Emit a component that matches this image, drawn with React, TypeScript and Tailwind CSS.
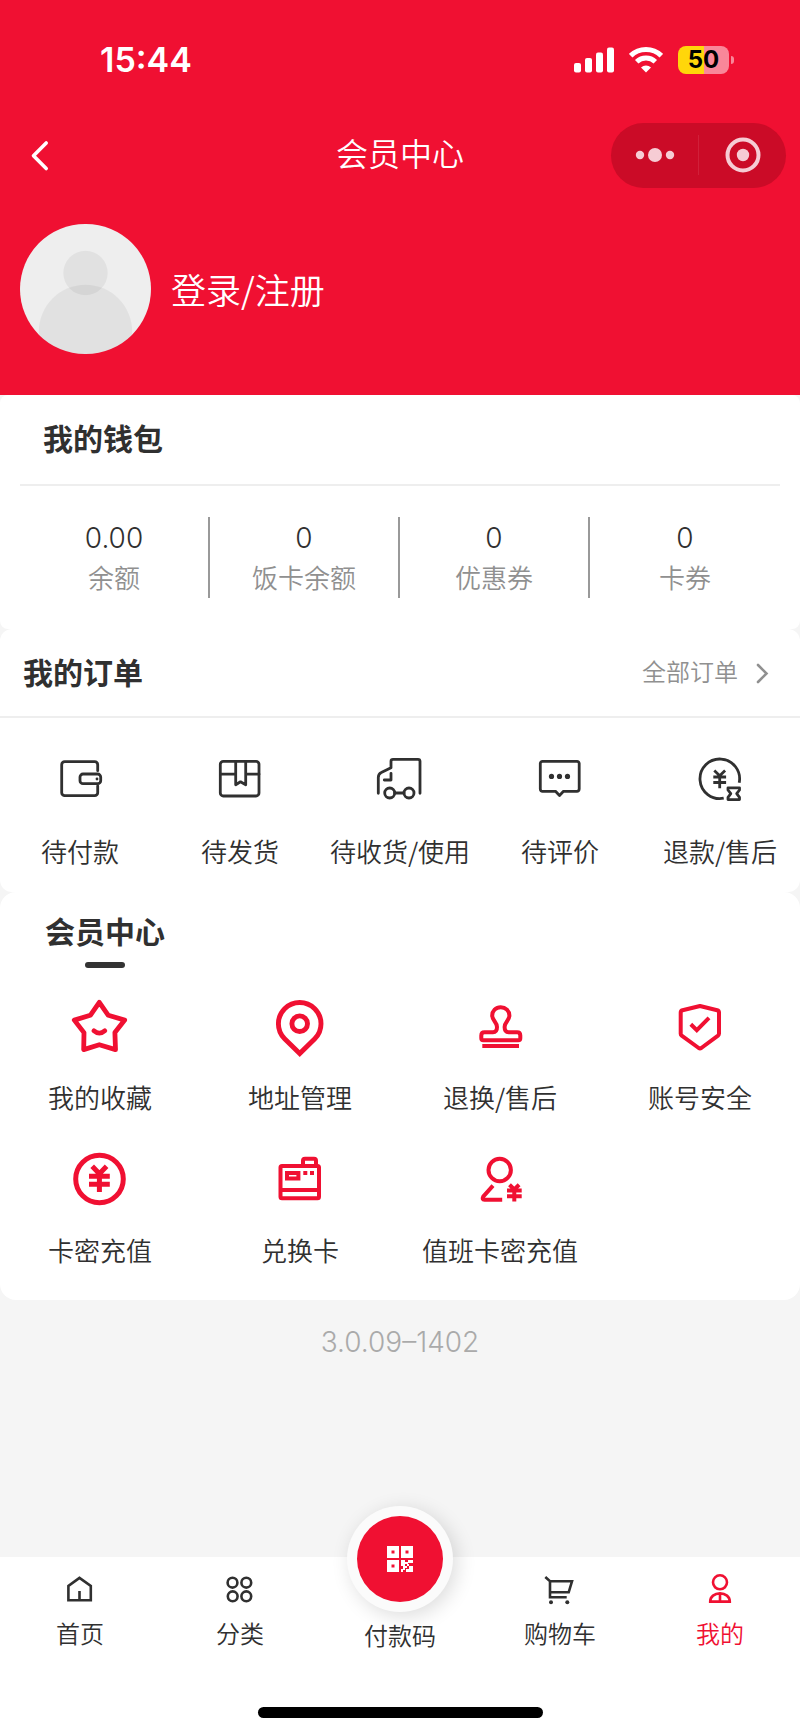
import type { ReactNode } from 'react';

interface Entry {
  label: string;
  icon: ReactNode;
}

const wallet = [
  { value: '0.00', label: '余额' },
  { value: '0', label: '饭卡余额' },
  { value: '0', label: '优惠券' },
  { value: '0', label: '卡券' },
];

const orders: Entry[] = [
  {
    label: '待付款',
    icon: (
      <>
        <path d="M41.7 15.7V9.7a3 3 0 0 0-3-3H8.7a3 3 0 0 0-3 3v28a3 3 0 0 0 3 3h30a3 3 0 0 0 3-3V31" />
        <rect x="24" y="19" width="20.7" height="9.7" rx="3" />
        <circle cx="41" cy="24" r="1.4" fill="currentColor" stroke="none" />
      </>
    ),
  },
  {
    label: '待发货',
    icon: (
      <>
        <rect x="4.3" y="6.3" width="38.7" height="34.7" rx="3" />
        <path d="M4.3 19.2h15.4M29.7 19.2H43M19.7 6.3v23.5l4.8-3 5.2 3V6.3" />
      </>
    ),
  },
  {
    label: '待收货/使用',
    icon: (
      <>
        <path d="M2.3 38.3V22.5c0-2.4.9-3.9 3-4.9L15 12.7V6.3c0-1.4.6-2 2-2h25c1.4 0 2 .6 2 2v32" />
        <path d="M15 18.3V25H8.3M18.7 38H28" />
        <circle cx="13.7" cy="38" r="5" />
        <circle cx="33" cy="38" r="5" />
      </>
    ),
  },
  {
    label: '待评价',
    icon: (
      <>
        <path d="M6.5 6.3H41a2.2 2.2 0 0 1 2.2 2.2v25.6a2.2 2.2 0 0 1-2.2 2.2H27.5l-4 4.2-4-4.2h-13a2.2 2.2 0 0 1-2.2-2.2V8.5a2.2 2.2 0 0 1 2.2-2.2z" />
        <g fill="currentColor" stroke="none">
          <circle cx="15.5" cy="21.4" r="2.6" />
          <circle cx="23.5" cy="21.4" r="2.6" />
          <circle cx="31.5" cy="21.4" r="2.6" />
        </g>
      </>
    ),
  },
  {
    label: '退款/售后',
    icon: (
      <>
        <path d="M43.2 27.7A19.8 19.8 0 1 0 27.7 43.2" strokeLinecap="butt" />
        <path d="M18.3 15.5l5.4 5.2 5.4-5.2M17.3 22h12.8M17.3 27.5h12.8M23.7 20.7V33.3" strokeLinecap="butt" />
        <path d="M32 32.8h11.5v2.2l-2.8 3.7 2.8 3.7v2.2H32v-2.2l2.8-3.7L32 35z" />
      </>
    ),
  },
];

const services: Entry[] = [
  {
    label: '我的收藏',
    icon: (
      <g strokeWidth="4.8">
        <path d="M31.3 8.3l9 13 16.4 4.8L46.9 38.6l.6 17-16.2-4.9-15.6 4.9.3-17L6.3 26.1l16-4.8z" />
        <path d="M25.9 36.8c3.3 3 7.6 3 10.9 0" />
      </g>
    ),
  },
  {
    label: '地址管理',
    icon: (
      <g strokeWidth="4.9" strokeLinejoin="miter">
        <path d="M31.7 59.5L16.6 44.8a21.3 21.3 0 1 1 30.2 0z" />
        <circle cx="31.7" cy="29.7" r="7.8" />
      </g>
    ),
  },
  {
    label: '退换/售后',
    icon: (
      <g strokeWidth="4">
        <path d="M32.7 13.2c-5 0-8.5 3.8-8.5 8.3 0 5 4.8 6.4 4.8 11.5 0 3.4-1.5 5.3-4 5.3h-8.5c-2 0-3.2 1.2-3.2 3.2v2.7c0 1.4.7 2.1 2 2.1h35c1.3 0 2-.7 2-2.1v-2.7c0-2-1.2-3.2-3.2-3.2h-8.5c-2.5 0-4-1.9-4-5.3 0-5.1 4.8-6.5 4.8-11.5 0-4.5-3.7-8.3-8.7-8.3z" />
        <path d="M14.3 52H51" strokeLinecap="butt" />
      </g>
    ),
  },
  {
    label: '账号安全',
    icon: (
      <g strokeWidth="4">
        <path d="M32 12l17.2 4.3q1.8.5 1.8 2.3v21q0 1.2-1 2L33.3 54q-1.3.8-2.6 0L13.7 41.7q-1-.8-1-2V18.6q0-1.8 1.8-2.3z" />
        <path d="M22.8 30.3l6 5.8 12.2-12.2" strokeLinecap="butt" strokeLinejoin="miter" />
      </g>
    ),
  },
  {
    label: '卡密充值',
    icon: (
      <g strokeWidth="5" strokeLinecap="butt">
        <circle cx="31.5" cy="32" r="23.8" />
        <path d="M24.2 19.2l7.2 7.5 7.2-7.5M21 29.3h20.8M21 37.2h20.8M31.4 26v19" />
      </g>
    ),
  },
  {
    label: '兑换卡',
    icon: (
      <g strokeWidth="4" strokeLinecap="butt">
        <rect x="12.5" y="19" width="38.5" height="32.3" rx="1.5" />
        <path d="M12.5 43H51M35 19v-5.3q0-2 2-2h9q2 0 2 2V19" />
        <path d="M19 26h11.4v5.4H19z" strokeLinejoin="miter" />
        <path d="M35.3 26h4M42 26h4" />
      </g>
    ),
  },
  {
    label: '值班卡密充值',
    icon: (
      <g strokeWidth="4" strokeLinecap="butt">
        <circle cx="31.7" cy="23" r="11.2" />
        <path d="M25 38.7l-9.8 11q-1.5 3 1.3 3H34.2" />
        <path d="M41.5 37.7l4.8 4.7 4.8-4.7M39 43.6h14.7M39 49.3h14.7M46.3 42v12.5" />
      </g>
    ),
  },
];

const homeTab: Entry = {
  label: '首页',
  icon: <path d="M15.5 4.9L4.4 13v14.3h22.4V13zM15.5 18v9.3" />,
};

const categoryTab: Entry = {
  label: '分类',
  icon: (
    <>
      <circle cx="8.5" cy="9.7" r="4.9" />
      <circle cx="22.3" cy="9.7" r="4.9" />
      <circle cx="8.7" cy="23.3" r="4.9" />
      <circle cx="22.3" cy="23.3" r="4.9" />
    </>
  ),
};

const cartTab: Entry = {
  label: '购物车',
  icon: (
    <>
      <path d="M1.3 4L6 8.3h22l-3.3 11H6M6 8.3v16h16.7" />
      <circle cx="7" cy="29.3" r="2" fill="currentColor" stroke="none" />
      <circle cx="23.3" cy="29.3" r="2" fill="currentColor" stroke="none" />
    </>
  ),
};

const mineTab: Entry = {
  label: '我的',
  icon: (
    <>
      <circle cx="16" cy="9.3" r="7" />
      <path d="M6.2 28.6c0-5 4.3-8.2 9.8-8.2s9.800 3.200 9.800 8.200zM16 20.400v8.200" />
    </>
  ),
};

function StatusBar() {
  return (
    <div className="flex h-[110px] items-center justify-between pt-[10px] pr-[66px] pl-[100px]">
      <span className="text-[34px] leading-10 font-semibold">15:44</span>
      <div className="flex items-center gap-[15px]">
        <svg width="40" height="26" viewBox="0 0 40 26" fill="currentColor">
          <rect x="0" y="16" width="7" height="9.5" rx="2" />
          <rect x="11" y="11" width="7" height="14.5" rx="2" />
          <rect x="22" y="5.5" width="7" height="20" rx="2" />
          <rect x="33" y="0.5" width="7" height="25" rx="2" />
        </svg>
        <svg width="34" height="26" viewBox="0 0 34 26" fill="none" stroke="currentColor" strokeWidth="5">
          <path d="M1.7 8.7a22 22 0 0 1 30.6 0" />
          <path d="M7.7 14.8a13.5 13.5 0 0 1 18.6 0" />
          <path d="M17 25.5l-5-5a7.2 7.2 0 0 1 10 0z" fill="currentColor" stroke="none" />
        </svg>
        <div className="flex items-center gap-[2px]">
          <div className="flex h-7 w-[51px] items-center justify-center rounded-lg bg-linear-to-r from-[#ffd60a] from-50% to-[#f98799] to-50% text-2xl leading-7 font-bold text-black">
            50
          </div>
          <span className="h-2 w-[3px] rounded-r-full bg-[#f98799]" />
        </div>
      </div>
    </div>
  );
}

function NavBar() {
  return (
    <div className="grid h-[90px] grid-cols-[1fr_auto_1fr] items-center px-[14px]">
      <button type="button" aria-label="返回" className="justify-self-start px-[14px]">
        <svg width="24" height="36" viewBox="0 0 24 36" fill="none" stroke="currentColor" strokeWidth="3.6" strokeLinecap="round" strokeLinejoin="round">
          <path d="M18.2 6L5.5 18.7l12.700 12.800" />
        </svg>
      </button>
      <h1 className="text-[32px] leading-10">会员中心</h1>
      <div className="flex h-[65px] w-[175px] items-center justify-self-end rounded-full bg-[#cb0b27] text-[#f6ccd4]">
        <button type="button" aria-label="更多" className="flex h-10 flex-1 items-center justify-center border-r border-[#d1203a]">
          <svg width="40" height="16" viewBox="0 0 40 16" fill="currentColor">
            <circle cx="5" cy="8" r="4.2" />
            <circle cx="20" cy="8" r="7" />
            <circle cx="35" cy="8" r="4.2" />
          </svg>
        </button>
        <button type="button" aria-label="关闭" className="flex flex-1 items-center justify-center">
          <svg width="36" height="36" viewBox="0 0 36 36" fill="none" stroke="currentColor" strokeWidth="4">
            <circle cx="18" cy="18" r="15.5" />
            <circle cx="18" cy="18" r="6.2" fill="currentColor" stroke="none" />
          </svg>
        </button>
      </div>
    </div>
  );
}

function Profile() {
  return (
    <div className="px-5 pt-6 pb-[41px]">
      <button type="button" className="flex items-center gap-5">
        <svg className="rounded-full bg-[#eeeeee]" width="131" height="130" viewBox="0 0 131 130" fill="#000000" fillOpacity="0.05">
          <circle cx="65.5" cy="49" r="22.2" />
          <circle cx="65.5" cy="107.5" r="46.7" />
        </svg>
        <span className="font-['Noto_Sans_CJK_SC',sans-serif] text-[35px] leading-10">登录/注册</span>
      </button>
    </div>
  );
}

function Wallet() {
  return (
    <section className="rounded-lg bg-white px-5">
      <h2 className="flex h-[91px] items-center border-b-2 border-[#eeeeee] pl-[23px] text-[30px] font-bold">我的钱包</h2>
      <div className="grid grid-cols-4 py-[31px]">
        {wallet.map((item) => (
          <button key={item.label} type="button" className="border-r-2 border-[#999999] text-center last:border-r-0">
            <span className="block text-[28px] leading-[42px]">{item.value}</span>
            <span className="block text-[26px] leading-[39px] text-[#909090]">{item.label}</span>
          </button>
        ))}
      </div>
    </section>
  );
}

function Orders() {
  return (
    <section className="rounded-xl bg-white">
      <div className="flex h-[89px] items-center justify-between border-b-2 border-[#eeeeee] pr-[30px] pl-[23px]">
        <h2 className="text-[30px] leading-10 font-bold">我的订单</h2>
        <a href="#orders" className="flex items-center gap-4 text-2xl text-[#909090]">
          全部订单
          <svg width="16" height="22" viewBox="0 0 16 22" fill="none" stroke="currentColor" strokeWidth="2.6" strokeLinecap="round">
            <path d="M4 3l8.500 8.500L4 20" />
          </svg>
        </a>
      </div>
      <div className="grid grid-cols-5 pt-[37px] pb-[21px]">
        {orders.map((item) => (
          <button key={item.label} type="button" className="flex flex-col items-center gap-7">
            <svg width="48" height="48" viewBox="0 0 48 48" fill="none" stroke="currentColor" strokeWidth="2.8" strokeLinecap="round" strokeLinejoin="round">
              {item.icon}
            </svg>
            <span className="font-['Noto_Sans_CJK_SC',sans-serif] text-[26px] leading-10 whitespace-nowrap">{item.label}</span>
          </button>
        ))}
      </div>
    </section>
  );
}

function MemberCenter() {
  return (
    <section className="rounded-2xl bg-white pt-5 pb-[30px]">
      <div className="flex">
        <div className="ml-[45px] flex flex-col items-center gap-[10px]">
          <h2 className="text-[30px] leading-10 font-bold">会员中心</h2>
          <span className="h-[6px] w-10 rounded-full bg-[#333333]" />
        </div>
      </div>
      <div className="grid grid-cols-4 gap-y-[30px] pt-[26px]">
        {services.map((item) => (
          <button key={item.label} type="button" className="flex flex-col items-center gap-[19px]">
            <svg className="text-[#f01032]" width="64" height="64" viewBox="0 0 64 64" fill="none" stroke="currentColor" strokeLinecap="round" strokeLinejoin="round">
              {item.icon}
            </svg>
            <span className="font-['Noto_Sans_CJK_SC',sans-serif] text-[26px] leading-10 whitespace-nowrap">{item.label}</span>
          </button>
        ))}
      </div>
    </section>
  );
}

function Tab({ item, active }: { item: Entry; active?: boolean }) {
  return (
    <a href="#tab" className={`flex flex-col items-center gap-[14px] pt-4 ${active ? 'text-[#f01032]' : ''}`}>
      <svg width="32" height="32" viewBox="0 0 32 32" fill="none" stroke="currentColor" strokeWidth="2.6">
        {item.icon}
      </svg>
      <span className="text-2xl leading-8">{item.label}</span>
    </a>
  );
}

function TabBar() {
  return (
    <footer className="mt-auto bg-white pb-4">
      <nav className="grid grid-cols-5">
        <Tab item={homeTab} />
        <Tab item={categoryTab} />
        <a href="#pay" className="-mt-[51px] flex flex-col items-center gap-[9px]">
          <span className="flex size-[106px] items-center justify-center rounded-full bg-[#fbfbfb] shadow-[4px_4px_20px_rgba(0,0,0,0.14)]">
            <span className="flex size-[86px] items-center justify-center rounded-full bg-[#f01032] text-white">
              <svg width="26" height="26" viewBox="0 0 26 26" fill="currentColor" fillRule="evenodd">
                <path d="M0 0h12v12H0zM4.5 4.5v3h3v-3z" />
                <path d="M14 0h12v12H14zM18.5 4.5v3h3v-3z" />
                <path d="M0 14h12v12H0zM4.5 18.5v3h3v-3z" />
                <path d="M14 14h4v2h3v2h-3v2h-4zM21 14h5v3h-5zM20 18h2v2h-2zM22 20h4v6h-7v-3h3zM16 20h4v2h-2v2h-2v2h-2v-3h2z" />
              </svg>
            </span>
          </span>
          <span className="text-2xl leading-8">付款码</span>
        </a>
        <Tab item={cartTab} />
        <Tab item={mineTab} active />
      </nav>
      <div className="mx-auto mt-[54px] h-[11px] w-[285px] rounded-full bg-black" />
    </footer>
  );
}

export default function App() {
  return (
    <div className="flex min-h-screen flex-col bg-[#f5f5f5] font-['Inter','Noto_Sans_CJK_SC',sans-serif] font-[350] text-[#303030]">
      <header className="bg-[#f01032] text-white">
        <StatusBar />
        <NavBar />
        <Profile />
      </header>
      <main>
        <Wallet />
        <Orders />
        <MemberCenter />
        <p className="pt-[22px] text-center text-[28px] leading-10 text-[#aaaaaa]">3.0.09–1402</p>
      </main>
      <TabBar />
    </div>
  );
}
